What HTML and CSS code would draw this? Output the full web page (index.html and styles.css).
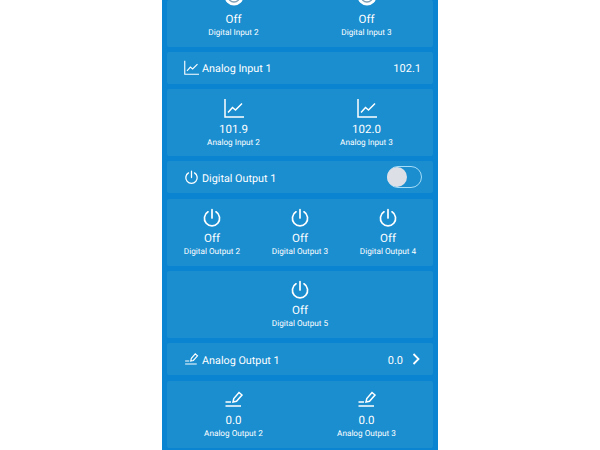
FILE: index.html
```html
<!DOCTYPE html>
<html lang="en">
<head>
<meta charset="utf-8">
<title>Device I/O</title>
<link rel="stylesheet" href="styles.css">
</head>
<body>
<svg class="defs" width="0" height="0" aria-hidden="true">
  <symbol id="chart" viewBox="0 0 20 20"><path d="M1 1V19H20M4 14.5L8.5 9.5L11.5 12L18 5.5" fill="none" stroke="currentColor" stroke-width="1.5"/></symbol>
  <symbol id="power" viewBox="0 0 20 20"><path d="M10 1.5V10M6 3.8A7.6 7.6 0 1 0 14 3.8" fill="none" stroke="currentColor" stroke-width="1.7" stroke-linecap="round"/></symbol>
  <symbol id="pen" viewBox="0 0 20 20"><path d="M1.5 12H7M1.5 16H17M9 12L9.8 8.5L15 2.5L18 5L12.5 11.3Z" fill="none" stroke="currentColor" stroke-width="1.5"/></symbol>
  <symbol id="knob" viewBox="0 0 20 20"><circle cx="10" cy="10" r="9.5" fill="#fff"/><circle cx="10" cy="10" r="6" fill="none" stroke="#7f9fb5" stroke-width="1.3"/></symbol>
</svg>
<main class="panel">
  <section class="card grid cols-2 clipped">
    <div class="cell"><svg class="icon knob"><use href="#knob"/></svg><span class="value">Off</span><span class="label">Digital Input 2</span></div>
    <div class="cell"><svg class="icon knob"><use href="#knob"/></svg><span class="value">Off</span><span class="label">Digital Input 3</span></div>
  </section>
  <section class="card row">
    <svg class="row-icon"><use href="#chart"/></svg><span class="title">Analog Input 1</span><span class="reading">102.1</span>
  </section>
  <section class="card grid cols-2">
    <div class="cell"><svg class="icon"><use href="#chart"/></svg><span class="value">101.9</span><span class="label">Analog Input 2</span></div>
    <div class="cell"><svg class="icon"><use href="#chart"/></svg><span class="value">102.0</span><span class="label">Analog Input 3</span></div>
  </section>
  <section class="card row">
    <svg class="row-icon"><use href="#power"/></svg><span class="title">Digital Output 1</span>
    <span class="switch"><span class="thumb"></span></span>
  </section>
  <section class="card grid cols-3">
    <div class="cell"><svg class="icon"><use href="#power"/></svg><span class="value">Off</span><span class="label">Digital Output 2</span></div>
    <div class="cell"><svg class="icon"><use href="#power"/></svg><span class="value">Off</span><span class="label">Digital Output 3</span></div>
    <div class="cell"><svg class="icon"><use href="#power"/></svg><span class="value">Off</span><span class="label">Digital Output 4</span></div>
  </section>
  <section class="card grid">
    <div class="cell"><svg class="icon"><use href="#power"/></svg><span class="value">Off</span><span class="label">Digital Output 5</span></div>
  </section>
  <section class="card row">
    <svg class="row-icon"><use href="#pen"/></svg><span class="title">Analog Output 1</span><span class="reading">0.0</span>
    <svg class="chevron" viewBox="0 0 8 12"><path d="M1.5 1L6.5 6L1.5 11" fill="none" stroke="currentColor" stroke-width="1.8"/></svg>
  </section>
  <section class="card grid cols-2">
    <div class="cell"><svg class="icon"><use href="#pen"/></svg><span class="value">0.0</span><span class="label">Analog Output 2</span></div>
    <div class="cell"><svg class="icon"><use href="#pen"/></svg><span class="value">0.0</span><span class="label">Analog Output 3</span></div>
  </section>
</main>
</body>
</html>
```
FILE: styles.css
```css
* { box-sizing: border-box; }
html, body { height: 100%; }
body {
  margin: 0;
  background: #fff;
  overflow: hidden;
  font-family: Roboto, "Liberation Sans", sans-serif;
  color: #fff;
  text-rendering: geometricPrecision;
}
.defs { display: block; height: 0; }
.panel {
  width: 276px;
  height: 450px;
  margin: 0 auto;
  padding: 0 5px;
  background: #0a84d0;
  display: flex;
  flex-direction: column;
  gap: 5.3px;
  overflow: hidden;
}
.card { background: #1a8ecf; border-radius: 2px; flex: none; }
.row {
  height: 32px;
  display: flex;
  align-items: center;
  padding: 0 12px 0 17px;
  font-size: 10.8px;
}
.row-icon { width: 15px; height: 15px; margin-right: 3px; flex: none; }
.title { flex: 1; padding-top: 2px; }
.reading { flex: none; font-size: 11px; padding-top: 2px; }
.chevron { width: 8px; height: 12px; margin-left: 9px; margin-right: 1px; }
.grid { display: grid; height: 67px; grid-template-rows: 61px; align-items: end; padding-bottom: 6px; }
.cols-2 { grid-template-columns: 1fr 1fr; }
.cols-3 { grid-template-columns: 1fr 1fr 1fr; padding-left: 1px; padding-right: 1px; }
.clipped { height: 46.5px; grid-template-rows: 40.5px; overflow: hidden; }
.cell { display: flex; flex-direction: column; align-items: center; }
.icon { width: 20px; height: 20px; margin-bottom: 3.5px; }
.knob { margin-bottom: 6px; }
.value { font-size: 11.5px; line-height: 14px; }
.label { font-size: 8.2px; line-height: 13.5px; margin-top: 1px; }
.switch {
  width: 35px;
  height: 22px;
  margin-right: -1px;
  border: 1.5px solid #a5dcf7;
  border-radius: 11px;
  display: flex;
  align-items: center;
}
.thumb { width: 20px; height: 20px; border-radius: 50%; background: #dcdfe6; margin-left: -1px; flex: none; }
```
